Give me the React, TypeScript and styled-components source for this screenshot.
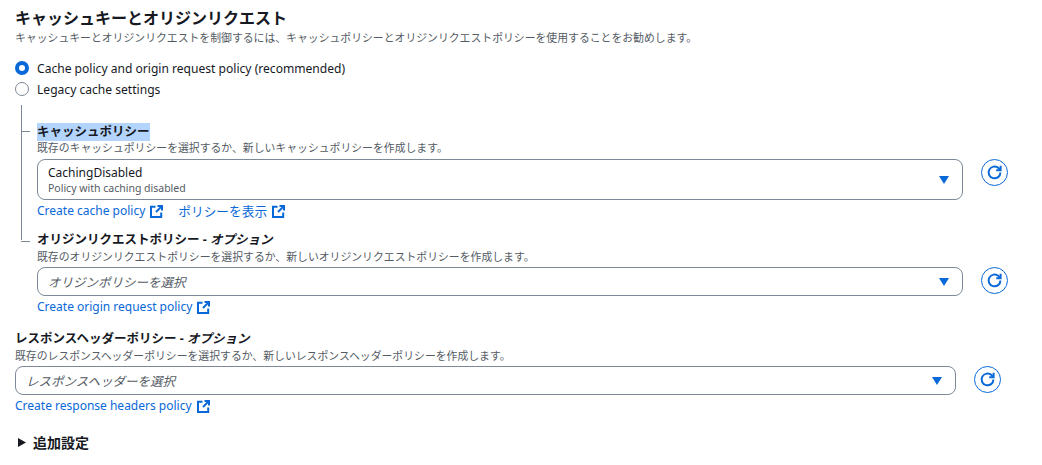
import React from "react";
import styled, { createGlobalStyle } from "styled-components";

const Global = createGlobalStyle`
  html, body { margin: 0; padding: 0; background: #fff; }
  body { font-family: "Noto Sans", "Noto Sans CJK JP", sans-serif; color: #16191f; }
`;

const Page = styled.div`
  width: 1042px;
  height: 465px;
  overflow: hidden;
  box-sizing: border-box;
  padding: 8px 0 0 15px;
`;
const Title = styled.h2`
  margin: 0 0 2px;
  font-size: 16px;
  line-height: 20px;
  font-weight: 700;
`;
const Hint = styled.div`
  font-size: 10.85px;
  line-height: 16px;
  color: #545b64;
`;
const RadioGroup = styled.div`
  margin-top: 14px;
  display: flex;
  flex-direction: column;
  gap: 5px;
`;
const RadioRow = styled.label`
  display: flex;
  align-items: center;
  gap: 8px;
  height: 16px;
  font-size: 12.08px;
`;
const RadioDot = styled.span<{ $on?: boolean }>`
  width: 14px;
  height: 14px;
  border-radius: 50%;
  box-sizing: border-box;
  background: #fff;
  border: ${(p) => (p.$on ? "4px solid #0968d8" : "1px solid #7d8998")};
`;
const Tree = styled.div`
  position: relative;
  margin: 8px 0 0 6px;
  padding: 17px 0 0 16px;
  &::before {
    content: "";
    position: absolute;
    left: 0;
    top: 0;
    height: 135px;
    width: 1px;
    background: #7d8998;
  }
`;
const TreeItem = styled.div<{ $last?: boolean }>`
  position: relative;
  &::before {
    content: "";
    position: absolute;
    left: -16px;
    top: ${(p) => (p.$last ? "10px" : "9px")};
    width: 9px;
    height: 1px;
    background: #7d8998;
  }
`;
const Field = styled.div<{ $mt?: number }>`
  margin-top: ${(p) => p.$mt ?? 0}px;
`;
const Label = styled.div`
  font-size: 12.5px;
  line-height: 18px;
  font-weight: 700;
`;
const Selected = styled.span`
  position: relative;
  top: 1px;
  z-index: 0;
  &::before {
    content: "";
    position: absolute;
    z-index: -1;
    left: 0;
    right: 0;
    top: 0;
    height: 18px;
    background: #b3d4fc;
  }
`;
const Em = styled.em`
  font-style: italic;
`;
const Row = styled.div<{ $mt?: number }>`
  display: flex;
  align-items: flex-start;
  gap: 18px;
  margin-top: ${(p) => p.$mt ?? 2}px;
`;
const Select = styled.div<{ $w: number; $tall?: boolean }>`
  width: ${(p) => p.$w}px;
  height: ${(p) => (p.$tall ? 41 : 29)}px;
  box-sizing: border-box;
  border: 1px solid #7d8998;
  border-radius: 8px;
  padding: 0 13px 0 10px;
  display: flex;
  align-items: center;
  justify-content: space-between;
`;
const Value = styled.div`
  font-size: 12px;
  line-height: 16px;
`;
const Desc = styled.div`
  font-size: 10.5px;
  line-height: 14px;
  color: #545b64;
`;
const Placeholder = styled.span`
  font-size: 12.5px;
  font-style: italic;
  color: #545b64;
`;
const Caret = styled.svg`
  width: 10px;
  height: 8px;
  fill: #0968d8;
  flex: none;
`;
const Refresh = styled.button`
  width: 27px;
  height: 27px;
  padding: 0;
  border: 1px solid #0968d8;
  border-radius: 50%;
  background: #fff;
  display: flex;
  align-items: center;
  justify-content: center;
  flex: none;
`;
const Links = styled.div`
  display: flex;
  gap: 15px;
  margin-top: 3px;
`;
const Link = styled.a<{ $ja?: boolean }>`
  display: inline-flex;
  align-items: center;
  gap: 5px;
  font-size: ${(p) => (p.$ja ? "12.7px" : "12px")};
  line-height: 16px;
  color: #0968d8;
`;
const Expander = styled.div`
  display: flex;
  align-items: center;
  gap: 7px;
  margin-top: 18px;
  margin-left: 3px;
  font-size: 14px;
  font-weight: 700;
`;
const Tri = styled.svg`
  width: 8px;
  height: 9px;
  fill: #16191f;
`;

const External = () => (
  <svg width="13" height="13" viewBox="0 0 13 13" fill="none" stroke="#0968d8" strokeWidth="2">
    <path d="M5.5 1.8H1v10.2h10.2V7.5" />
    <path d="M7.5 1h4.5v4.5M11.6 1.4 6 7" />
  </svg>
);
const RefreshIcon = () => (
  <svg width="17" height="17" viewBox="0 0 17 17" fill="none" stroke="#0968d8" strokeWidth="2">
    <path d="M14.4 8.5a5.9 5.9 0 1 1-1.9-4.4L14 5.6" />
    <path d="M14.6 1.8V6.2H10.2" />
  </svg>
);
const Arrow = () => (
  <Caret viewBox="0 0 10 8"><path d="M0 0h10L5 8z" /></Caret>
);

export default function App() {
  return (
    <Page>
      <Global />
      <Title>キャッシュキーとオリジンリクエスト</Title>
      <Hint>キャッシュキーとオリジンリクエストを制御するには、キャッシュポリシーとオリジンリクエストポリシーを使用することをお勧めします。</Hint>
      <RadioGroup>
        <RadioRow><RadioDot $on />Cache policy and origin request policy (recommended)</RadioRow>
        <RadioRow><RadioDot />Legacy cache settings</RadioRow>
      </RadioGroup>
      <Tree>
        <TreeItem>
          <Label><Selected>キャッシュポリシー</Selected></Label>
          <Hint>既存のキャッシュポリシーを選択するか、新しいキャッシュポリシーを作成します。</Hint>
          <Row $mt={3}>
            <Select $w={926} $tall>
              <div>
                <Value>CachingDisabled</Value>
                <Desc>Policy with caching disabled</Desc>
              </div>
              <Arrow />
            </Select>
            <Refresh><RefreshIcon /></Refresh>
          </Row>
          <Links>
            <Link>Create cache policy <External /></Link>
            <Link $ja>ポリシーを表示 <External /></Link>
          </Links>
        </TreeItem>
        <TreeItem $last>
          <Field $mt={12}>
            <Label>オリジンリクエストポリシー - <Em>オプション</Em></Label>
            <Hint>既存のオリジンリクエストポリシーを選択するか、新しいオリジンリクエストポリシーを作成します。</Hint>
            <Row>
              <Select $w={926}><Placeholder>オリジンポリシーを選択</Placeholder><Arrow /></Select>
              <Refresh><RefreshIcon /></Refresh>
            </Row>
            <Links><Link>Create origin request policy <External /></Link></Links>
          </Field>
        </TreeItem>
      </Tree>
      <Field $mt={15}>
        <Label>レスポンスヘッダーポリシー - <Em>オプション</Em></Label>
        <Hint>既存のレスポンスヘッダーポリシーを選択するか、新しいレスポンスヘッダーポリシーを作成します。</Hint>
        <Row>
          <Select $w={941}><Placeholder>レスポンスヘッダーを選択</Placeholder><Arrow /></Select>
          <Refresh><RefreshIcon /></Refresh>
        </Row>
        <Links><Link>Create response headers policy <External /></Link></Links>
      </Field>
      <Expander>
        <Tri viewBox="0 0 8 9"><path d="M0 0l8 4.5L0 9z" /></Tri>
        追加設定
      </Expander>
    </Page>
  );
}
